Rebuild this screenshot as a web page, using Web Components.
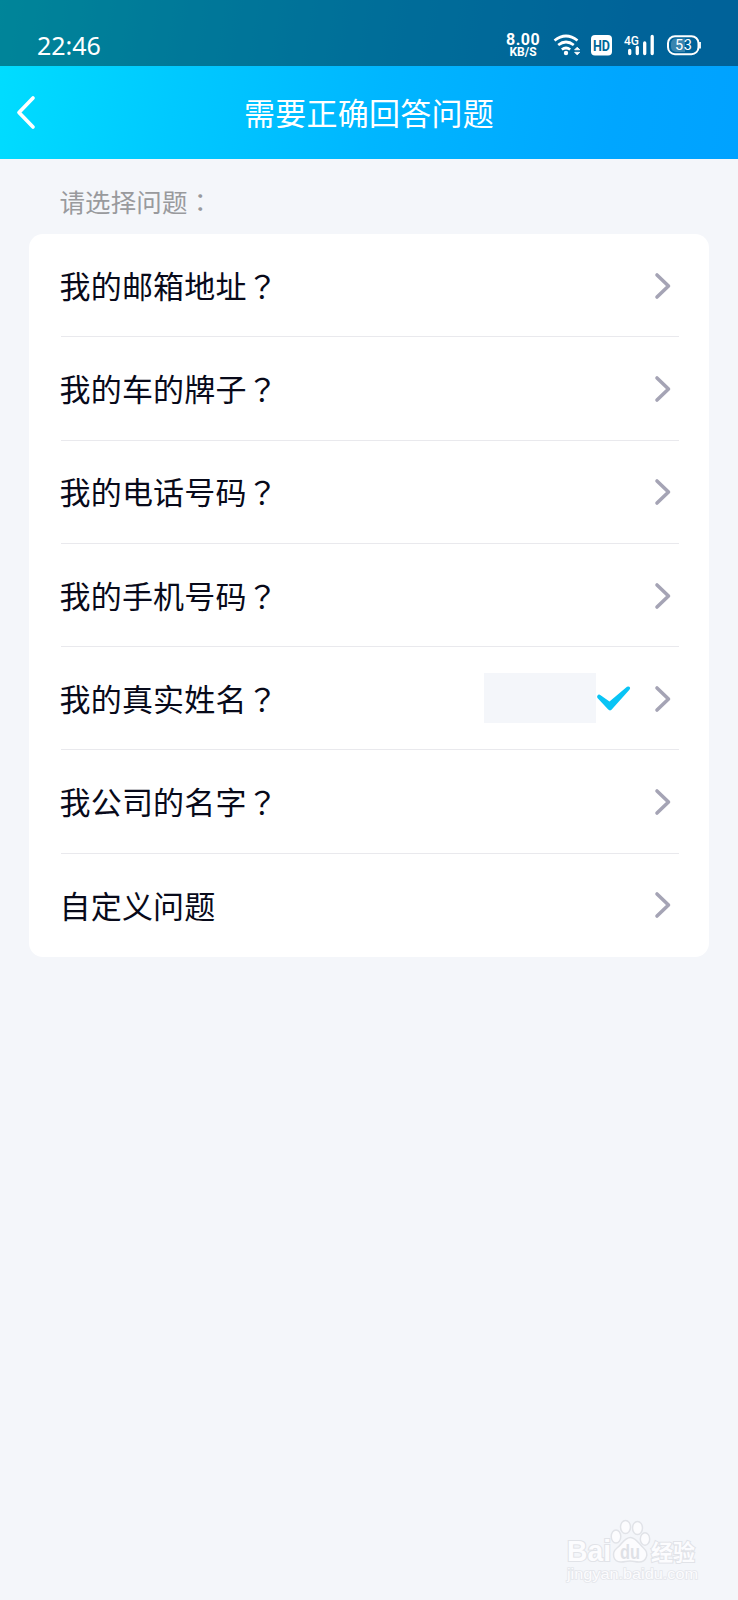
<!DOCTYPE html>
<html lang="zh-CN">
<head>
<meta charset="utf-8">
<meta name="viewport" content="width=device-width">
<title>需要正确回答问题</title>
<style>
body{margin:0;background:#f4f6fa;font-family:"Noto Sans CJK SC","Noto Sans",sans-serif}
</style>
</head>
<body>
<question-page></question-page>
<script>
const define=(name,html)=>customElements.define(name,class extends HTMLElement{
  constructor(){
    super();
    const t=document.createElement('template');
    t.innerHTML=html;
    this.attachShadow({mode:'open'}).append(t.content.cloneNode(true));
  }
});

define('status-bar',`<style>
:host{display:flex;box-sizing:border-box;height:66px;padding:24px 37px 0;align-items:center;background:rgba(0,0,0,.4);color:#fff;font-family:"Noto Sans",sans-serif}
.time{font-size:25px;line-height:40px;padding-bottom:1px;flex:1}
.speed{font:700 12px/12px Roboto,sans-serif;text-align:center;width:34px;margin:2px 12px 0 0;white-space:pre-line}
.speed::first-line{font-size:16px;letter-spacing:.5px}
svg{display:block;flex:none}
text{font-family:Roboto,sans-serif}
</style>
<span class="time">22:46</span>
<p class="speed">8.00
KB/S</p>
<svg width="149" height="42" viewBox="552 24 149 42" fill="none" stroke="#fff">
 <path d="M554.5 40.5Q566 31.5 577.5 40.5M558.2 45Q566 39 573.800 45M561.800 49.500Q566 46.500 570.200 49.500" stroke-width="2.700"/>
 <circle cx="566" cy="53" r="2.200" fill="#fff" stroke="none"/>
 <path d="M574.600 49.800l2.600-2.600 2.600 2.600zM574.600 52.300l2.600 2.600 2.600-2.600z" fill="#fff" stroke-width=".8"/>
 <rect x="591" y="35" width="21" height="20.500" rx="4" fill="#fff" stroke="none"/>
 <text x="601.500" y="51" font-size="15.500" font-weight="700" fill="#006797" stroke="none" text-anchor="middle" textLength="17" lengthAdjust="spacingAndGlyphs">HD</text>
 <text x="624" y="45" font-size="13.500" font-weight="500" fill="#fff" stroke="none" textLength="15" lengthAdjust="spacingAndGlyphs">4G</text>
 <path d="M629.700 50.500v3M637.300 47.500v6M644.700 43v10.500M652.200 36.500v17" stroke-width="3.300" stroke-linecap="round"/>
 <rect x="668" y="36.200" width="30.500" height="18" rx="7" stroke-width="2"/>
 <path d="M700 42v6.500" stroke-width="1.800"/>
 <path d="M676 38.500h9v13.500h-9a5 5 0 0 1-5-5v-3.500a5 5 0 0 1 5-5z" fill="#fff" fill-opacity=".22" stroke="none"/>
 <text x="683.500" y="50.300" font-size="14.500" fill="#fff" stroke="none" text-anchor="middle" textLength="17" lengthAdjust="spacing">53</text>
</svg>`);

define('title-bar',`<style>
:host{display:grid;grid-template-columns:60px 1fr 60px;align-items:center;height:93px;color:#fff}
svg{display:block;margin:0 0 2px 14px}
h1{margin:0 0 1px;font-size:31px;line-height:46px;font-weight:400;text-align:center;letter-spacing:.25px}
</style>
<svg width="24" height="36" viewBox="0 0 24 36" fill="none" stroke="#fff" stroke-width="3.700" stroke-linecap="round" stroke-linejoin="round"><path d="M19 4L5 18.500 19 33"/></svg>
<h1><slot></slot></h1>`);

define('question-row',`<style>
:host{display:flex;position:relative;height:103.300px;align-items:center;box-sizing:border-box;padding:0 37px 0 30.500px;color:#080a1a;font-family:"Noto Sans CJK SC",sans-serif;font-size:31px;letter-spacing:.2px}
.label{flex:1;white-space:nowrap;line-height:46px;padding-bottom:1.800px}
.chevron{display:block;margin-left:23px}
.rule{position:absolute;left:32px;right:30px;bottom:0;height:1px;background:#e9e9ed}
:host([last]) .rule{display:none}
.mark{font-family:"Noto Sans CJK TC",sans-serif}
:host([last]) .mark{display:none}
</style>
<span class="label"><slot></slot><span class="mark" lang="zh-TW">？</span></span><slot name="value"></slot>
<svg class="chevron" width="18" height="28" viewBox="0 0 18 28" fill="none" stroke="#a5a4b5" stroke-width="3.600" stroke-linecap="round" stroke-linejoin="round"><path d="M3 3L14.500 14 3 25"/></svg>
<i class="rule"></i>`);

define('masked-answer',`<style>
:host{display:flex;align-items:center;padding-bottom:1px}
.mask{width:112px;height:50px;background:#f4f6fa;margin-right:1px}
svg{display:block}
</style>
<span class="mask"></span>
<svg width="34" height="28" viewBox="1 -.5 34 28"><path d="M1.400 11.300Q2.600 9.300 4.600 10.700L13.500 17 31 2.300Q33 1.200 34 3 34.400 4.200 33.200 5.600L15.500 25.200Q13.800 26.700 12.200 25.100L1.500 13.500Q.8 12.500 1.400 11.300z" fill="#09c4f5"/></svg>`);

define('question-card',`<style>
:host{display:block;margin:0 29px;height:723px;background:#fff;border-radius:14px}
</style><slot></slot>`);

define('site-watermark',`<style>
:host{display:block;width:140px;height:70px}
svg{display:block}
text{font-family:"Liberation Sans","Noto Sans CJK SC",sans-serif;paint-order:stroke}
</style>
<svg width="140" height="70" viewBox="562 1516 140 70" fill="#fcfcfe" stroke="#e1e3e8" stroke-width="1.500">
 <text x="567" y="1561" font-size="29" font-weight="700" stroke-width="2.200" textLength="44" lengthAdjust="spacingAndGlyphs">Bai</text>
 <ellipse cx="616" cy="1536.500" rx="4.800" ry="6.500"/>
 <ellipse cx="625.500" cy="1527" rx="5" ry="6.500"/>
 <ellipse cx="637.500" cy="1528" rx="5" ry="6.500"/>
 <ellipse cx="645" cy="1539" rx="4.700" ry="6.200"/>
 <path d="M630.500 1537.500C636 1537.500 639 1544 643.500 1548C650 1554 646 1562 639 1562C635 1562 634 1561 630 1561C626 1561 625 1562 621 1562C613 1562 611 1553 617 1548C622 1544 624.500 1537.500 630.500 1537.500z"/>
 <text x="620" y="1558.500" font-size="20" font-weight="700" fill="#dfe1e6" stroke="none" textLength="20" lengthAdjust="spacingAndGlyphs">du</text>
 <text x="651" y="1560" font-size="22" font-weight="700" stroke-width="2">经验</text>
 <text x="567" y="1579" font-size="15.500" stroke="#e4e6eb" stroke-width="1.600" textLength="131" lengthAdjust="spacingAndGlyphs">jingyan.baidu.com</text>
</svg>`);

define('question-page',`<style>
:host{display:flex;flex-direction:column;width:738px;height:1600px;background:#f4f6fa}
header{height:159px;background:linear-gradient(100deg,#00deff 0%,#00c9ff 25%,#00b6ff 52%,#00a6ff 83%,#00a2ff 100%)}
.hint{margin:0;height:75px;box-sizing:border-box;padding:23px 0 0 59.500px;font-size:25.500px;line-height:38px;color:#999a9d;letter-spacing:.1px}
.hint span{font-family:"Noto Sans CJK TC",sans-serif}
site-watermark{margin:auto 36px 14px auto}
</style>
<header>
 <status-bar></status-bar>
 <title-bar>需要正确回答问题</title-bar>
</header>
<p class="hint">请选择问题<span lang="zh-TW">：</span></p>
<question-card>
 <question-row>我的邮箱地址</question-row>
 <question-row>我的车的牌子</question-row>
 <question-row>我的电话号码</question-row>
 <question-row>我的手机号码</question-row>
 <question-row>我的真实姓名<masked-answer slot="value"></masked-answer></question-row>
 <question-row>我公司的名字</question-row>
 <question-row last>自定义问题</question-row>
</question-card>
<site-watermark></site-watermark>`);
</script>
</body>
</html>
